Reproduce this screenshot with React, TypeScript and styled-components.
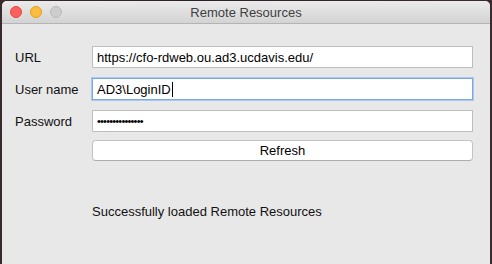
import styled, { createGlobalStyle } from "styled-components";

const GlobalStyle = createGlobalStyle`
  html, body {
    margin: 0;
    padding: 0;
  }
  body {
    font-family: "Liberation Sans", Arial, sans-serif;
    background: #2b2327;
  }
`;

const Desktop = styled.div`
  width: 492px;
  height: 264px;
  box-sizing: border-box;
  padding: 1px 2px 0 2px;
  background: linear-gradient(90deg, #3a2a2c 0%, #2a2228 40%, #3b2b30 100%);
`;

const Window = styled.div`
  width: 488px;
  height: 263px;
  border-radius: 5px 5px 0 0;
  overflow: hidden;
  background: #e8e8e8;
  display: flex;
  flex-direction: column;
`;

const TitleBar = styled.div`
  height: 22px;
  flex-shrink: 0;
  display: flex;
  align-items: center;
  background: linear-gradient(#ebebeb, #d3d3d3);
  border-bottom: 1px solid #b4b4b4;
`;

const Lights = styled.div`
  display: flex;
  gap: 8px;
  padding-left: 8px;
`;

const Light = styled.span<{ $color: string; $edge: string }>`
  width: 12px;
  height: 12px;
  border-radius: 50%;
  box-sizing: border-box;
  background: ${({ $color }) => $color};
  border: 1px solid ${({ $edge }) => $edge};
`;

const Title = styled.div`
  flex: 1;
  text-align: center;
  font-size: 13px;
  color: #3f3f3f;
  margin-right: 60px;
`;

const Body = styled.div`
  padding: 22px 16px 0 13px;
  display: flex;
  flex-direction: column;
`;

const Form = styled.div`
  display: grid;
  grid-template-columns: 77px 381px;
  row-gap: 10px;
  align-items: center;
`;

const Label = styled.div`
  font-size: 13px;
  color: #111;
`;

const Field = styled.div<{ $focused?: boolean }>`
  height: 22px;
  box-sizing: border-box;
  background: #fff;
  border: 1px solid ${({ $focused }) => ($focused ? "#7aa7e6" : "#bdbdbd")};
  box-shadow: ${({ $focused }) => ($focused ? "0 0 0 1px #a9c8f2" : "none")};
  padding: 0 4px;
  display: flex;
  align-items: center;
  font-size: 13px;
  color: #000;
  white-space: nowrap;
`;

const Dots = styled.span`
  font-size: 11px;
  letter-spacing: -0.8px;
`;

const Caret = styled.span`
  width: 1px;
  height: 15px;
  background: #000;
  margin-left: 1px;
`;

const Button = styled.button`
  grid-column: 2;
  height: 21px;
  margin-top: -2px;
  border: 1px solid #c3c3c3;
  border-bottom-color: #adadad;
  border-radius: 4px;
  background: #fff;
  font-family: inherit;
  font-size: 13px;
  color: #000;
  padding: 0;
`;

const Status = styled.div`
  margin-top: 43px;
  padding-left: 77px;
  font-size: 13px;
  color: #111;
`;

export default function App() {
  return (
    <>
      <GlobalStyle />
      <Desktop>
        <Window>
          <TitleBar>
            <Lights>
              <Light $color="#fc605c" $edge="#e2463f" />
              <Light $color="#fdbc40" $edge="#e1a116" />
              <Light $color="#cdcdcd" $edge="#b9b9b9" />
            </Lights>
            <Title>Remote Resources</Title>
          </TitleBar>
          <Body>
            <Form>
              <Label>URL</Label>
              <Field>https://cfo-rdweb.ou.ad3.ucdavis.edu/</Field>
              <Label>User name</Label>
              <Field $focused>
                AD3\LoginID
                <Caret />
              </Field>
              <Label>Password</Label>
              <Field>
                <Dots>{"\u2022".repeat(15)}</Dots>
              </Field>
              <Button>Refresh</Button>
            </Form>
            <Status>Successfully loaded Remote Resources</Status>
          </Body>
        </Window>
      </Desktop>
    </>
  );
}
